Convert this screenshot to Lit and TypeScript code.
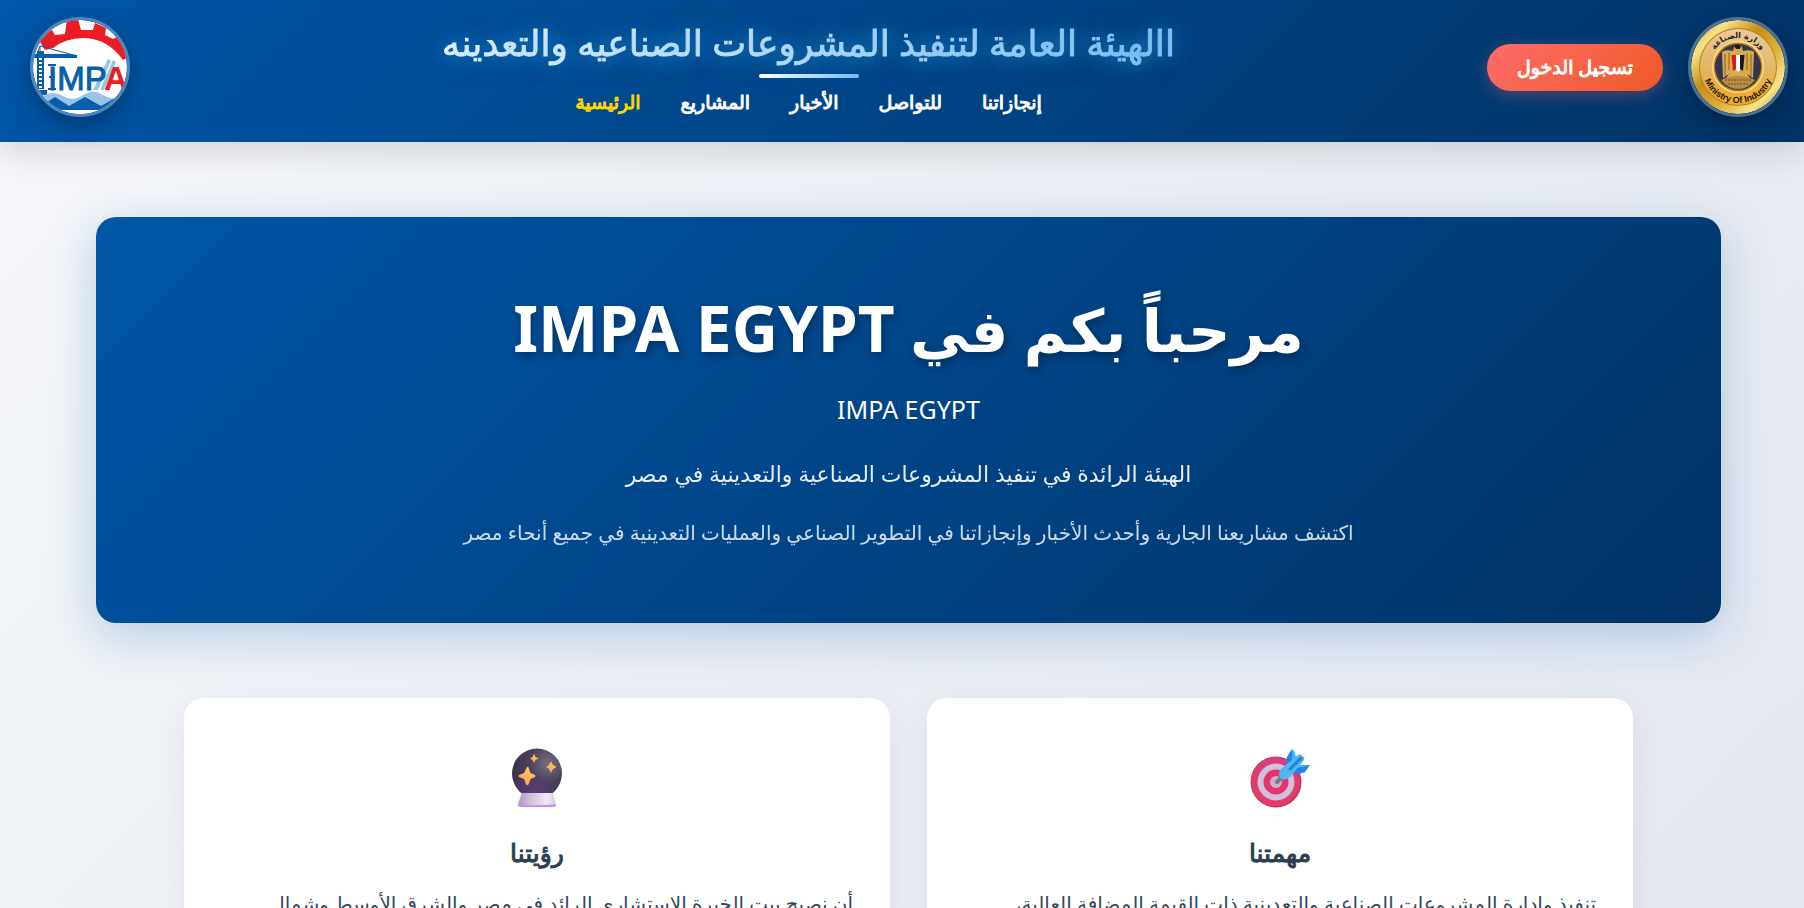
import { LitElement, html, css, svg } from "lit";
import { customElement, property } from "lit/decorators.js";

const impaLogo = svg`
  <svg viewBox="0 0 94 94" role="img" aria-label="IMPA">
    <rect width="94" height="94" fill="#fff"/>
    <path d="M12 30 L7 22 L12 13 L19 10 L22 15 L32 14 L34 -1 H45 L48 10 L60 10 L62 3 L73 8 L72 15 L80 19 L86 16 L97 26 L94 38 L90 40 Q74 18 50 18 Q33 18 20 28 Z" fill="#ec1c24"/>
    <g fill="#0a5dab">
      <path d="M4 31 H11 V69 H4 Z"/>
      <path d="M0 34 H36 L44 35 V38 H0 Z"/>
      <path d="M0 70 H14 V75 H8 Z"/>
    </g>
    <path d="M4 34 L7 26 L44 36 M7 26 V34" fill="none" stroke="#0a5dab" stroke-width="1"/>
    <path d="M7.500 38 V68" stroke="#fff" stroke-width="3" stroke-dasharray="2 2"/>
    <path d="M60 70 L75 39 L78 41 L65 70 Z M67 70 L80 40 L83 42 L71 70 Z" fill="#97c5ea"/>
    <path d="M15 45 H23 M15 69 H23 M16 57 H22" stroke="#0a5dab" stroke-width="2"/>
    <text x="15" y="70" font-family="Liberation Sans" font-size="33" stroke-width="1" stroke="#0a5dab" fill="#0a5dab">IMP</text>
    <text x="71" y="70" font-family="Liberation Sans" font-size="33" font-weight="700" fill="#ec1c24">A</text>
    <path d="M10 76 Q20 70 30 76 T50 75 T70 75 T90 74 V92 H10 Z" fill="#97c5ea"/>
    <path d="M8 86 L22 77 L36 86 L52 77 L68 86 L84 77 L96 84 V90 H4 Z" fill="#0a5dab"/>
    <rect y="90" width="94" height="6" fill="#fff"/>
  </svg>`;

const ministryLogo = svg`
  <svg viewBox="0 0 94 94" role="img" aria-label="Ministry Of Industry">
    <defs>
      <linearGradient id="rim" x1="0" y1="0" x2="1" y2="1">
        <stop offset="0" stop-color="#c8951f"/><stop offset=".2" stop-color="#f8e287"/>
        <stop offset=".4" stop-color="#c48f1c"/><stop offset=".6" stop-color="#dcae38"/>
        <stop offset=".8" stop-color="#f8e48e"/><stop offset="1" stop-color="#b07c12"/>
      </linearGradient>
      <linearGradient id="face" x1="0" y1="0" x2="0" y2="1">
        <stop offset="0" stop-color="#eccb98"/><stop offset=".5" stop-color="#e3b566"/><stop offset="1" stop-color="#f3a91f"/>
      </linearGradient>
      <path id="arcTop" d="M18 47 A29 29 0 0 1 76 47"/>
      <path id="arcBottom" d="M11 47 A36 36 0 0 0 83 47"/>
    </defs>
    <circle cx="47" cy="47" r="47" fill="url(#rim)"/>
    <circle cx="47" cy="47" r="39" fill="#b98218"/>
    <circle cx="47" cy="47" r="38" fill="url(#face)"/>
    <circle cx="47" cy="47" r="26" fill="#fbe08a"/>
    <circle cx="47" cy="47" r="24.500" fill="#b98218"/>
    <circle cx="47" cy="47" r="23" fill="#333450"/>
    <path d="M43 27 Q47 21 51 27 L52 31 Q60 29 63 32 L62 58 L56 54 L62 62 H32 L38 54 L32 58 L31 32 Q34 29 42 31 Z" fill="#d9a94d"/>
    <path d="M34 34 V56 M38 33 V50 M56 33 V50 M60 34 V56" stroke="#8a6424" stroke-width="1"/>
    <path d="M40.500 35 H45 V49 L42 51 Z" fill="#d71920"/>
    <path d="M45 35 H49 V50 L47 52 L45 50 Z" fill="#fff"/>
    <path d="M49 35 H53.500 L52 51 L49 49 Z" fill="#161616"/>
    <path d="M43 26 Q47 22 50 26 L49 29 H45 Z" fill="#1c1a20"/>
    <path d="M30 60 Q47 52 64 60 Q57 69 47 69 Q37 69 30 60 Z" fill="#b98c46"/>
    <path d="M34 60 H60 M37 64 H57" stroke="#6e5024" stroke-width="1" stroke-dasharray="2 1"/>
    <text font-family="DejaVu Sans" font-size="8" font-weight="700" fill="#25233a" text-anchor="middle"><textPath href="#arcTop" startOffset="50%">وزارة الصناعة</textPath></text>
    <text font-family="Liberation Sans" font-size="9" font-weight="700" fill="#25180a" text-anchor="middle"><textPath href="#arcBottom" startOffset="50%">Ministry Of Industry</textPath></text>
  </svg>`;

const targetIcon = svg`
  <svg viewBox="0 0 60 60" aria-hidden="true">
    <defs><linearGradient id="red" x1="0" y1="0" x2="0" y2="1">
      <stop offset="0" stop-color="#d4407c"/><stop offset="1" stop-color="#e83a62"/></linearGradient></defs>
    <circle cx="26" cy="34" r="25.500" fill="#c22f62"/>
    <circle cx="25.500" cy="33.500" r="24.500" fill="url(#red)"/>
    <circle cx="26" cy="34" r="18.500" fill="#cfc0dc"/>
    <circle cx="26" cy="34" r="12.500" fill="#e8336a"/>
    <circle cx="26" cy="34" r="6" fill="#c4b2d0"/>
    <path d="M27 34 L35 26" stroke="#80718c" stroke-width="4" stroke-linecap="round"/>
    <path d="M36 18 L37 9 L42 1 L46 9 L45 16 Z M43 24 L50 17 L60 17 L55 24 L49 26 Z" fill="#2384e8"/>
    <path d="M42 1 L45 4 L46 13 L42 15 Z M45 20 L50 17 L60 17 L53 19 Z" fill="#42b6f4"/>
    <path d="M31 21 L48 7 Q51 5 52 8 Q55 9 54 12 L41 28 Q36 33 31 31 Q27 27 31 21 Z" fill="#4fb8f0"/>
    <path d="M40 21 L51 10" stroke="#247fdc" stroke-width="3" stroke-linecap="round"/>
  </svg>`;

const crystalIcon = svg`
  <svg viewBox="0 0 60 60" aria-hidden="true">
    <defs>
      <radialGradient id="ball" cx=".72" cy=".3" r=".75">
        <stop offset="0" stop-color="#757080"/><stop offset=".5" stop-color="#4a4158"/><stop offset="1" stop-color="#38304a"/>
      </radialGradient>
      <radialGradient id="violet" cx=".4" cy="1" r=".6">
        <stop offset="0" stop-color="#66408c" stop-opacity=".9"/><stop offset="1" stop-color="#66408c" stop-opacity="0"/>
      </radialGradient>
      <linearGradient id="foot" x1="0" y1="0" x2="1" y2="0">
        <stop offset="0" stop-color="#a899b8"/><stop offset=".3" stop-color="#cdbfda"/><stop offset=".75" stop-color="#efe8f5"/><stop offset="1" stop-color="#d8cce2"/>
      </linearGradient>
      <linearGradient id="star" x1="1" y1="0" x2="0" y2="1">
        <stop offset="0" stop-color="#ffd94f"/><stop offset="1" stop-color="#fc9268"/>
      </linearGradient>
    </defs>
    <circle cx="30" cy="25.500" r="25" fill="url(#ball)"/>
    <circle cx="30" cy="25.500" r="25" fill="url(#violet)"/>
    <path d="M15 45 H46 L49 56 Q49 59 46 59 H14 Q11 59 11 56 Z" fill="url(#foot)"/>
    <path d="M11 56 Q30 58.500 49 56 Q49 59 46 59 H14 Q11 59 11 56 Z" fill="#cb8de8"/>
    <g fill="url(#star)">
      <path d="M20 19 Q21.500 18 22 21 L23.500 25 L28 27 Q29 28 28 29 L23.500 31 L21.500 36.500 Q20 38 19 36.500 L17 31 L12 29 Q11 28 12 27 L17 25 Z"/>
      <path d="M44 13.500 L46 17 L49.500 19 L46 21 L44 25 L42 21 L39 19 L42 17 Z"/>
      <path d="M27 6 L28.500 9 L31.500 10.500 L28.500 12 L27 15 L25.500 12 L23 10.500 L25.500 9 Z"/>
    </g>
  </svg>`;

@customElement("site-header")
class SiteHeader extends LitElement {
  static styles = css`
    :host { display: block; position: relative; z-index: 1; }
    header {
      display: flex; align-items: center; justify-content: space-between;
      padding: 12px 16px 20px 30px;
      background: linear-gradient(135deg, #0056a8, #003366);
      box-shadow: 0 8px 32px rgba(0, 0, 0, 0.15);
    }
    .logo {
      box-sizing: border-box; width: 100px; height: 100px; flex: none;
      border-radius: 50%; overflow: hidden;
      border: 3px solid rgba(255, 255, 255, 0.3);
      box-shadow: 0 8px 25px rgba(0, 0, 0, 0.3);
    }
    .logo svg { display: block; width: 100%; height: 100%; border-radius: 50%; }
    .brand { display: flex; flex-direction: column; align-items: center; height: 110px; }
    .title {
      margin: 0; font-size: 36px; line-height: 62px; font-weight: 400; white-space: nowrap;
      background: linear-gradient(45deg, #ffffff, #84c4f8);
      -webkit-background-clip: text; background-clip: text; color: transparent;
      -webkit-text-stroke: 1px transparent;
      text-shadow: 0 0 30px rgba(80, 180, 240, 0.6), 0 0 20px rgba(80, 180, 240, 0.5);
    }
    .rule { width: 100px; height: 4px; border-radius: 2px; background: linear-gradient(90deg, #ffffff, #74b9ff); }
    nav { display: flex; gap: 40px; padding-top: 8px; }
    nav a { color: #fff; text-decoration: none; font-size: 19px; line-height: 32px; font-weight: 400; -webkit-text-stroke: 1px currentColor; }
    nav a.active { color: #ffd700; }
    .side { display: flex; align-items: center; gap: 25px; }
    .login {
      font: inherit; font-size: 19px; font-weight: 400; line-height: 23px; color: #fff;
      padding: 12px 30px; border: 0; border-radius: 25px;
      -webkit-text-stroke: 1px currentColor;
      background: linear-gradient(135deg, #ff6b6b, #ee5a24);
      box-shadow: 0 4px 15px rgba(255, 107, 107, 0.3);
    }
  `;
  links = ["الرئيسية", "المشاريع", "الأخبار", "للتواصل", "إنجازاتنا"];
  render() {
    return html`
      <header>
        <div class="logo">${impaLogo}</div>
        <div class="brand">
          <h1 class="title" dir="rtl">االهيئة العامة لتنفيذ المشروعات الصناعيه والتعدينه</h1>
          <div class="rule"></div>
          <nav>${this.links.map((t, i) => html`<a href="#" class=${i === 0 ? "active" : ""}>${t}</a>`)}</nav>
        </div>
        <div class="side">
          <button class="login" type="button">تسجيل الدخول</button>
          <div class="logo">${ministryLogo}</div>
        </div>
      </header>`;
  }
}

@customElement("info-card")
class InfoCard extends LitElement {
  static styles = css`
    :host {
      display: block; padding: 44px 37px; background: #fff; border-radius: 20px;
      box-shadow: 0 8px 32px rgba(0, 0, 0, 0.06);
    }
    .icon { display: flex; justify-content: center; padding-top: 6px; }
    .icon svg { width: 60px; height: 60px; }
    h3 { margin: 24px 0 0; font-size: 25px; line-height: 40px; font-weight: 400; -webkit-text-stroke: 1px currentColor; text-align: center; color: #2c3e50; }
    p { margin: 16px 0 0; font-size: 20px; line-height: 32px; color: #34495e; }
  `;
  @property() heading = "";
  @property() text = "";
  @property({ attribute: false }) icon: unknown;
  render() {
    return html`<div class="icon">${this.icon}</div><h3>${this.heading}</h3><p>${this.text}</p>`;
  }
}

@customElement("app-root")
class AppRoot extends LitElement {
  static styles = css`
    :host {
      display: block; height: 100vh; overflow: hidden;
      font-family: "Noto Sans", "DejaVu Sans", sans-serif;
      background: linear-gradient(135deg, #f6f8fb, #eceff5 50%, #e4e8f1);
    }
    main { padding: 75px 83px 0 96px; }
    .hero {
      display: flex; flex-direction: column; align-items: center; text-align: center;
      padding: 64px 40px 74px; border-radius: 20px; color: #fff;
      background: linear-gradient(135deg, #0056a8, #003366);
      box-shadow: 0 12px 48px rgba(0, 86, 168, 0.25);
    }
    .hero h2 { margin: 0; font-size: 59px; line-height: 96px; font-weight: 700; text-shadow: 2px 4px 8px rgba(0, 0, 0, 0.3); }
    .latin { font-size: 64px; line-height: 64px; }
    .sub { margin: 12px 0 0; font-size: 25px; line-height: 40px; }
    .lead { margin: 26px 0 0; font-size: 22px; line-height: 36px; opacity: 0.9; }
    .note { margin: 26px 0 0; font-size: 20px; line-height: 32px; opacity: 0.8; }
    .cards { display: grid; grid-template-columns: 1fr 1fr; gap: 37px; padding: 75px 88px 40px; }
  `;
  render() {
    return html`
      <site-header></site-header>
      <main dir="rtl">
        <section class="hero">
          <h2>مرحباً بكم في <span class="latin">IMPA EGYPT</span></h2>
          <p class="sub">IMPA EGYPT</p>
          <p class="lead">الهيئة الرائدة في تنفيذ المشروعات الصناعية والتعدينية في مصر</p>
          <p class="note">اكتشف مشاريعنا الجارية وأحدث الأخبار وإنجازاتنا في التطوير الصناعي والعمليات التعدينية في جميع أنحاء مصر</p>
        </section>
        <section class="cards">
          <info-card .icon=${targetIcon} heading="مهمتنا" text="تنفيذ وإدارة المشروعات الصناعية والتعدينية ذات القيمة المضافة العالية،"></info-card>
          <info-card .icon=${crystalIcon} heading="رؤيتنا" text="أن نصبح بيت الخبرة الاستشاري الرائد في مصر والشرق الأوسط وشمال"></info-card>
        </section>
      </main>`;
  }
}
